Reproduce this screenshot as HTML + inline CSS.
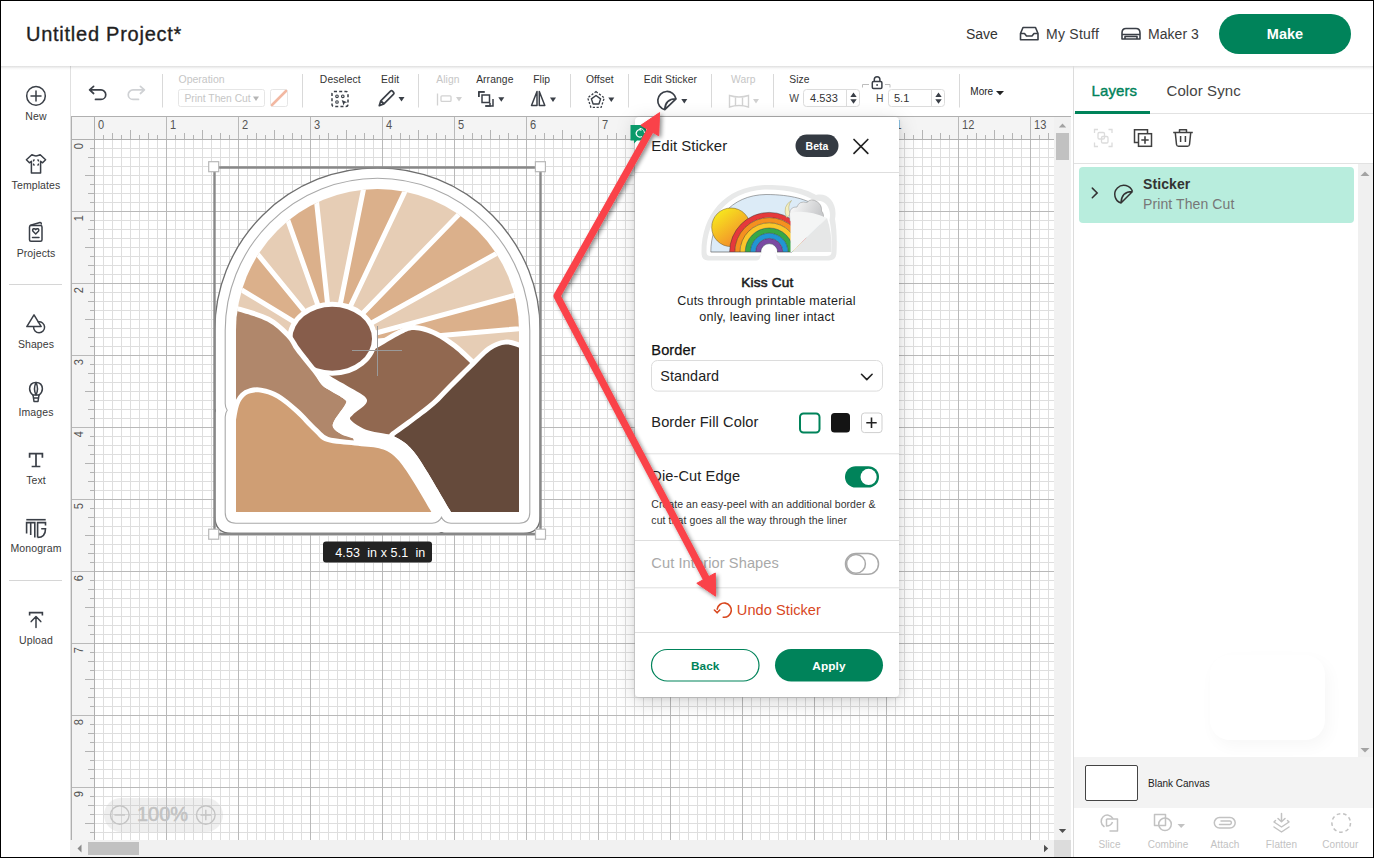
<!DOCTYPE html>
<html><head><meta charset="utf-8"><title>Cricut</title>
<style>
*{box-sizing:border-box;margin:0;padding:0}
html,body{width:1374px;height:858px;overflow:hidden;background:#fff;font-family:"Liberation Sans",sans-serif;color:#222}
.abs{position:absolute}
.t{position:absolute;white-space:nowrap;line-height:1}
</style></head><body>
<div class="abs" style="left:0;top:0;width:1374px;height:66px;background:#fff"></div><div class="abs" style="left:1219px;top:14px;width:132px;height:40px;border-radius:20px;background:#00835a"></div><div class="abs" style="left:70px;top:66px;width:1px;height:792px;background:#e0e0e0"></div><div class="abs" style="left:9px;top:284px;width:53px;height:1px;background:#d6d6d6"></div><div class="abs" style="left:9px;top:580px;width:53px;height:1px;background:#d6d6d6"></div><div class="abs" style="left:71px;top:66px;width:1002px;height:50px;background:#fff"></div><svg width="983" height="724" style="position:absolute;left:71px;top:116px" shape-rendering="crispEdges"><rect x="0" y="0" width="983" height="23" fill="#f4f4f4"/><rect x="0" y="0" width="23" height="724" fill="#f4f4f4"/><rect x="23" y="23" width="960" height="701" fill="#ffffff"/><path d="M32.5 23V724M41.5 23V724M50.5 23V724M59.5 23V724M68.5 23V724M77.5 23V724M86.5 23V724M104.5 23V724M113.5 23V724M122.5 23V724M131.5 23V724M140.5 23V724M149.5 23V724M158.5 23V724M176.5 23V724M185.5 23V724M194.5 23V724M203.5 23V724M212.5 23V724M221.5 23V724M230.5 23V724M248.5 23V724M257.5 23V724M266.5 23V724M275.5 23V724M284.5 23V724M293.5 23V724M302.5 23V724M320.5 23V724M329.5 23V724M338.5 23V724M347.5 23V724M356.5 23V724M365.5 23V724M374.5 23V724M392.5 23V724M401.5 23V724M410.5 23V724M419.5 23V724M428.5 23V724M437.5 23V724M446.5 23V724M464.5 23V724M473.5 23V724M482.5 23V724M491.5 23V724M500.5 23V724M509.5 23V724M518.5 23V724M536.5 23V724M545.5 23V724M554.5 23V724M563.5 23V724M572.5 23V724M581.5 23V724M590.5 23V724M608.5 23V724M617.5 23V724M626.5 23V724M635.5 23V724M644.5 23V724M653.5 23V724M662.5 23V724M680.5 23V724M689.5 23V724M698.5 23V724M707.5 23V724M716.5 23V724M725.5 23V724M734.5 23V724M752.5 23V724M761.5 23V724M770.5 23V724M779.5 23V724M788.5 23V724M797.5 23V724M806.5 23V724M824.5 23V724M833.5 23V724M842.5 23V724M851.5 23V724M860.5 23V724M869.5 23V724M878.5 23V724M896.5 23V724M905.5 23V724M914.5 23V724M923.5 23V724M932.5 23V724M941.5 23V724M950.5 23V724M968.5 23V724M977.5 23V724M23 32.5H983M23 41.5H983M23 50.5H983M23 59.5H983M23 68.5H983M23 77.5H983M23 86.5H983M23 104.5H983M23 113.5H983M23 122.5H983M23 131.5H983M23 140.5H983M23 149.5H983M23 158.5H983M23 176.5H983M23 185.5H983M23 194.5H983M23 203.5H983M23 212.5H983M23 221.5H983M23 230.5H983M23 248.5H983M23 257.5H983M23 266.5H983M23 275.5H983M23 284.5H983M23 293.5H983M23 302.5H983M23 320.5H983M23 329.5H983M23 338.5H983M23 347.5H983M23 356.5H983M23 365.5H983M23 374.5H983M23 392.5H983M23 401.5H983M23 410.5H983M23 419.5H983M23 428.5H983M23 437.5H983M23 446.5H983M23 464.5H983M23 473.5H983M23 482.5H983M23 491.5H983M23 500.5H983M23 509.5H983M23 518.5H983M23 536.5H983M23 545.5H983M23 554.5H983M23 563.5H983M23 572.5H983M23 581.5H983M23 590.5H983M23 608.5H983M23 617.5H983M23 626.5H983M23 635.5H983M23 644.5H983M23 653.5H983M23 662.5H983M23 680.5H983M23 689.5H983M23 698.5H983M23 707.5H983M23 716.5H983" stroke="#dedede" stroke-width="1" fill="none"/><path d="M95.5 0V724M167.5 0V724M239.5 0V724M311.5 0V724M383.5 0V724M455.5 0V724M527.5 0V724M599.5 0V724M671.5 0V724M743.5 0V724M815.5 0V724M887.5 0V724M959.5 0V724M0 95.5H983M0 167.5H983M0 239.5H983M0 311.5H983M0 383.5H983M0 455.5H983M0 527.5H983M0 599.5H983M0 671.5H983" stroke="#b9b9b9" stroke-width="1" fill="none"/><path d="M32.5 19V23M41.5 17V23M50.5 19V23M59.5 14V23M68.5 19V23M77.5 17V23M86.5 19V23M104.5 19V23M113.5 17V23M122.5 19V23M131.5 14V23M140.5 19V23M149.5 17V23M158.5 19V23M176.5 19V23M185.5 17V23M194.5 19V23M203.5 14V23M212.5 19V23M221.5 17V23M230.5 19V23M248.5 19V23M257.5 17V23M266.5 19V23M275.5 14V23M284.5 19V23M293.5 17V23M302.5 19V23M320.5 19V23M329.5 17V23M338.5 19V23M347.5 14V23M356.5 19V23M365.5 17V23M374.5 19V23M392.5 19V23M401.5 17V23M410.5 19V23M419.5 14V23M428.5 19V23M437.5 17V23M446.5 19V23M464.5 19V23M473.5 17V23M482.5 19V23M491.5 14V23M500.5 19V23M509.5 17V23M518.5 19V23M536.5 19V23M545.5 17V23M554.5 19V23M563.5 14V23M572.5 19V23M581.5 17V23M590.5 19V23M608.5 19V23M617.5 17V23M626.5 19V23M635.5 14V23M644.5 19V23M653.5 17V23M662.5 19V23M680.5 19V23M689.5 17V23M698.5 19V23M707.5 14V23M716.5 19V23M725.5 17V23M734.5 19V23M752.5 19V23M761.5 17V23M770.5 19V23M779.5 14V23M788.5 19V23M797.5 17V23M806.5 19V23M824.5 19V23M833.5 17V23M842.5 19V23M851.5 14V23M860.5 19V23M869.5 17V23M878.5 19V23M896.5 19V23M905.5 17V23M914.5 19V23M923.5 14V23M932.5 19V23M941.5 17V23M950.5 19V23M968.5 19V23M977.5 17V23M19 32.5H23M17 41.5H23M19 50.5H23M14 59.5H23M19 68.5H23M17 77.5H23M19 86.5H23M19 104.5H23M17 113.5H23M19 122.5H23M14 131.5H23M19 140.5H23M17 149.5H23M19 158.5H23M19 176.5H23M17 185.5H23M19 194.5H23M14 203.5H23M19 212.5H23M17 221.5H23M19 230.5H23M19 248.5H23M17 257.5H23M19 266.5H23M14 275.5H23M19 284.5H23M17 293.5H23M19 302.5H23M19 320.5H23M17 329.5H23M19 338.5H23M14 347.5H23M19 356.5H23M17 365.5H23M19 374.5H23M19 392.5H23M17 401.5H23M19 410.5H23M14 419.5H23M19 428.5H23M17 437.5H23M19 446.5H23M19 464.5H23M17 473.5H23M19 482.5H23M14 491.5H23M19 500.5H23M17 509.5H23M19 518.5H23M19 536.5H23M17 545.5H23M19 554.5H23M14 563.5H23M19 572.5H23M17 581.5H23M19 590.5H23M19 608.5H23M17 617.5H23M19 626.5H23M14 635.5H23M19 644.5H23M17 653.5H23M19 662.5H23M19 680.5H23M17 689.5H23M19 698.5H23M14 707.5H23M19 716.5H23" stroke="#b4b4b4" stroke-width="1" fill="none"/><path d="M0 0.5H983M0.5 0V724M0 23.5H983M23.5 0V724" stroke="#b0b0b0" stroke-width="1" fill="none"/><text transform="translate(27.1,13) scale(0.9,1)" font-size="12.3" fill="#555" font-family="Liberation Sans">0</text><text transform="translate(99.1,13) scale(0.9,1)" font-size="12.3" fill="#555" font-family="Liberation Sans">1</text><text transform="translate(171.1,13) scale(0.9,1)" font-size="12.3" fill="#555" font-family="Liberation Sans">2</text><text transform="translate(243.1,13) scale(0.9,1)" font-size="12.3" fill="#555" font-family="Liberation Sans">3</text><text transform="translate(315.1,13) scale(0.9,1)" font-size="12.3" fill="#555" font-family="Liberation Sans">4</text><text transform="translate(387.1,13) scale(0.9,1)" font-size="12.3" fill="#555" font-family="Liberation Sans">5</text><text transform="translate(459.1,13) scale(0.9,1)" font-size="12.3" fill="#555" font-family="Liberation Sans">6</text><text transform="translate(531.1,13) scale(0.9,1)" font-size="12.3" fill="#555" font-family="Liberation Sans">7</text><text transform="translate(603.1,13) scale(0.9,1)" font-size="12.3" fill="#555" font-family="Liberation Sans">8</text><text transform="translate(675.1,13) scale(0.9,1)" font-size="12.3" fill="#555" font-family="Liberation Sans">9</text><text transform="translate(747.1,13) scale(0.9,1)" font-size="12.3" fill="#555" font-family="Liberation Sans">10</text><text transform="translate(819.1,13) scale(0.9,1)" font-size="12.3" fill="#555" font-family="Liberation Sans">11</text><text transform="translate(891.1,13) scale(0.9,1)" font-size="12.3" fill="#555" font-family="Liberation Sans">12</text><text transform="translate(963.1,13) scale(0.9,1)" font-size="12.3" fill="#555" font-family="Liberation Sans">13</text><text transform="translate(12,27) rotate(-90) scale(0.9,1)" text-anchor="end" font-size="12.3" fill="#555" font-family="Liberation Sans">0</text><text transform="translate(12,99) rotate(-90) scale(0.9,1)" text-anchor="end" font-size="12.3" fill="#555" font-family="Liberation Sans">1</text><text transform="translate(12,171) rotate(-90) scale(0.9,1)" text-anchor="end" font-size="12.3" fill="#555" font-family="Liberation Sans">2</text><text transform="translate(12,243) rotate(-90) scale(0.9,1)" text-anchor="end" font-size="12.3" fill="#555" font-family="Liberation Sans">3</text><text transform="translate(12,315) rotate(-90) scale(0.9,1)" text-anchor="end" font-size="12.3" fill="#555" font-family="Liberation Sans">4</text><text transform="translate(12,387) rotate(-90) scale(0.9,1)" text-anchor="end" font-size="12.3" fill="#555" font-family="Liberation Sans">5</text><text transform="translate(12,459) rotate(-90) scale(0.9,1)" text-anchor="end" font-size="12.3" fill="#555" font-family="Liberation Sans">6</text><text transform="translate(12,531) rotate(-90) scale(0.9,1)" text-anchor="end" font-size="12.3" fill="#555" font-family="Liberation Sans">7</text><text transform="translate(12,603) rotate(-90) scale(0.9,1)" text-anchor="end" font-size="12.3" fill="#555" font-family="Liberation Sans">8</text><text transform="translate(12,675) rotate(-90) scale(0.9,1)" text-anchor="end" font-size="12.3" fill="#555" font-family="Liberation Sans">9</text></svg><div class="abs" style="left:0;top:66px;width:1374px;height:4px;background:linear-gradient(rgba(0,0,0,0.13),rgba(0,0,0,0.03) 60%,rgba(0,0,0,0))"></div><div class="abs" style="left:1054px;top:117px;width:17px;height:723px;background:#f1f1f1"></div><div class="abs" style="left:1056px;top:133px;width:13px;height:27px;background:#c1c1c1"></div><div class="abs" style="left:70px;top:840px;width:984px;height:17px;background:#f1f1f1"></div><div class="abs" style="left:88px;top:842px;width:51px;height:13px;background:#c1c1c1"></div><div class="abs" style="left:1054px;top:116px;width:17px;height:1px;background:#b0b0b0"></div><div class="abs" style="left:1054px;top:840px;width:17px;height:17px;background:#dcdcdc"></div><svg width="1374" height="858" style="position:absolute;left:0;top:0"><path d="M1058.8 127.5 L1062.5 123.5 L1066.2 127.5 Z" fill="#a3a3a3"/><path d="M1058.8 829 H1066.2 L1062.5 833 Z" fill="#505050"/><path d="M81.5 844.5 V852.5 L77.5 848.5 Z" fill="#8a8a8a"/><path d="M1044 844.8 V852.2 L1048.2 848.5 Z" fill="#505050"/></svg><div class="abs" style="left:1073px;top:66px;width:1px;height:792px;background:#dcdcdc"></div><div class="abs" style="left:1074px;top:113px;width:299px;height:1px;background:#e2e2e2"></div><div class="abs" style="left:1075px;top:111px;width:75px;height:3px;background:#00835a"></div><div class="abs" style="left:1074px;top:163px;width:299px;height:1px;background:#e2e2e2"></div><div class="abs" style="left:1358px;top:164px;width:15px;height:593px;background:#f0f0f0"></div><div class="abs" style="left:1079px;top:167px;width:275px;height:56px;border-radius:4px;background:#b8eddd"></div><div class="abs" style="left:1074px;top:757px;width:299px;height:51px;background:#f3f3f3"></div><div class="abs" style="left:1085px;top:765px;width:53px;height:36px;background:#fff;border:1px solid #444;border-radius:2px"></div><div class="abs" style="left:1210px;top:655px;width:115px;height:85px;border-radius:20px;box-shadow:4px 6px 16px rgba(0,0,0,0.035)"></div><svg width="1374" height="858" style="position:absolute;left:0;top:0" viewBox="0 0 1374 858" font-family="Liberation Sans, sans-serif"><text x="26" y="40.5" font-size="20" fill="#1f1f1f" letter-spacing="0.75" stroke="#1f1f1f" stroke-width="0.35">Untitled Project*</text><text x="966" y="39" font-size="14" fill="#333" >Save</text><text x="1046" y="39" font-size="14" fill="#3a3a3a" letter-spacing="0.25" >My Stuff</text><text x="1148" y="39" font-size="14" fill="#3a3a3a" letter-spacing="0.05" >Maker 3</text><text x="1285" y="39.3" font-size="14.5" fill="#fff" font-weight="700" text-anchor="middle" >Make</text><path d="M1020.5 33.5 L1023 27.5 H1035.5 L1038 33.5 V39.8 H1020.5 Z M1020.5 33.5 H1024.5 L1026.5 36 H1032 L1034 33.5 H1038" fill="none" stroke="#3a3f47" stroke-width="1.6" stroke-linejoin="round"/><path d="M1122 33 Q1122 28.5 1126 28.5 H1136 Q1140 28.5 1140 33 V39 H1122 Z M1122 34.5 H1140 M1125 39 V36.5 H1137 V39" fill="none" stroke="#3a3f47" stroke-width="1.6" stroke-linejoin="round"/><text x="36" y="120" font-size="10.5" fill="#3a3a3a" letter-spacing="0.1" text-anchor="middle" >New</text><text x="36" y="188.5" font-size="10.5" fill="#3a3a3a" letter-spacing="0.1" text-anchor="middle" >Templates</text><text x="36" y="256.5" font-size="10.5" fill="#3a3a3a" letter-spacing="0.1" text-anchor="middle" >Projects</text><text x="36" y="348" font-size="10.5" fill="#3a3a3a" letter-spacing="0.1" text-anchor="middle" >Shapes</text><text x="36" y="416" font-size="10.5" fill="#3a3a3a" letter-spacing="0.1" text-anchor="middle" >Images</text><text x="36" y="484" font-size="10.5" fill="#3a3a3a" letter-spacing="0.1" text-anchor="middle" >Text</text><text x="36" y="552" font-size="10.5" fill="#3a3a3a" letter-spacing="0.1" text-anchor="middle" >Monogram</text><text x="36" y="644" font-size="10.5" fill="#3a3a3a" letter-spacing="0.1" text-anchor="middle" >Upload</text><circle cx="36" cy="95.9" r="9.3" fill="none" stroke="#3a3f47" stroke-width="1.5" stroke-linecap="round" stroke-linejoin="round"/><path d="M36 91V101M31 96H41" fill="none" stroke="#3a3f47" stroke-width="1.5" stroke-linecap="round" stroke-linejoin="round"/><path d="M31.8 154.7 Q36 157.2 40.2 154.7 L45.6 159.8 L42.6 162.8 L40.6 161.3 V173 H31.4 V161.3 L29.4 162.8 L26.4 159.8 Z" fill="none" stroke="#3a3f47" stroke-width="1.5" stroke-linecap="round" stroke-linejoin="round"/><path d="M33.5 161.5V160H35M37 160H38.5V161.5M38.5 163.5V165H37M35 165H33.5V163.5" fill="none" stroke="#3a3f47" stroke-width="1.2"/><rect x="29.5" y="225.5" width="12.5" height="15.8" rx="1.5" fill="none" stroke="#3a3f47" stroke-width="1.5" stroke-linecap="round" stroke-linejoin="round"/><path d="M30.5 225.3 L40 222.5 Q41.2 222.3 41.3 224" fill="none" stroke="#3a3f47" stroke-width="1.5" stroke-linecap="round" stroke-linejoin="round"/><path d="M35.7 234 L33 231.3 Q32 229.5 33.6 228.8 Q35 228.4 35.7 229.7 Q36.4 228.4 37.8 228.8 Q39.4 229.5 38.4 231.3 Z" fill="none" stroke="#3a3f47" stroke-width="1.5" stroke-linecap="round" stroke-linejoin="round"/><path d="M32.5 237.5H39" fill="none" stroke="#3a3f47" stroke-width="1.5" stroke-linecap="round" stroke-linejoin="round"/><path d="M34 314.8 L26.8 326.6 H41.2 Z" fill="none" stroke="#3a3f47" stroke-width="1.5" stroke-linecap="round" stroke-linejoin="round"/><path d="M38.3 321.8 A5.5 5.5 0 1 1 33.6 326.8" fill="none" stroke="#3a3f47" stroke-width="1.5" stroke-linecap="round" stroke-linejoin="round"/><path d="M32.8 395 Q29.5 392 29.6 388.8 Q29.8 382.4 36 382.4 Q42.2 382.4 42.4 388.8 Q42.5 392 39.2 395 Z" fill="none" stroke="#3a3f47" stroke-width="1.5" stroke-linecap="round" stroke-linejoin="round"/><path d="M36 382.6 Q33 388.5 36 395 Q39 388.5 36 382.6" fill="none" stroke="#3a3f47" stroke-width="1.5" stroke-linecap="round" stroke-linejoin="round"/><path d="M33 395 L34 401.5 H38 L39 395 M33.6 398 H38.4" fill="none" stroke="#3a3f47" stroke-width="1.5" stroke-linecap="round" stroke-linejoin="round"/><path d="M29.6 457 V453.6 H42.4 V457 M36 453.8 V466.5 M32.5 466.5 H39.5" fill="none" stroke="#3a3f47" stroke-width="1.7" stroke-linecap="square"/><path d="M26.3 519.7 H45.7" fill="none" stroke="#3a3f47" stroke-width="1.6"/><path d="M26.6 533.5 V522.6 H34.8 V537.5 M30.7 535 V522.6 M37.6 537.5 V522.6 H45.5 V525.5 M41.2 528.7 H45.5 Q45.5 537.3 37.6 537.5" fill="none" stroke="#3a3f47" stroke-width="1.6"/><path d="M29.6 615.5 V612.6 H42.4 V615.5" fill="none" stroke="#3a3f47" stroke-width="1.6"/><path d="M31.2 621.6 L36 616.6 L40.8 621.6 M36 617 V627.5" fill="none" stroke="#3a3f47" stroke-width="1.5" stroke-linecap="round" stroke-linejoin="round" stroke-width="1.7"/><path d="M162.5 74V107.5" stroke="#d9d9d9" stroke-width="1"/><path d="M302.5 74V107.5" stroke="#d9d9d9" stroke-width="1"/><path d="M418.5 74V107.5" stroke="#d9d9d9" stroke-width="1"/><path d="M570.5 74V107.5" stroke="#d9d9d9" stroke-width="1"/><path d="M628.5 74V107.5" stroke="#d9d9d9" stroke-width="1"/><path d="M711.5 74V107.5" stroke="#d9d9d9" stroke-width="1"/><path d="M773.5 74V107.5" stroke="#d9d9d9" stroke-width="1"/><path d="M959.5 74V107.5" stroke="#d9d9d9" stroke-width="1"/><path d="M93.6 86.3 L89.6 89.9 L93.6 93.5 M89.8 89.9 H101 A4.75 4.75 0 0 1 101 99.4 H95.5" fill="none" stroke="#3a3f47" stroke-width="1.7" stroke-linecap="round" stroke-linejoin="round"/><path d="M140.4 86.3 L144.4 89.9 L140.4 93.5 M144.2 89.9 H133 A4.75 4.75 0 0 0 133 99.4 H138.5" fill="none" stroke="#cfd1d4" stroke-width="1.7" stroke-linecap="round" stroke-linejoin="round"/><text x="178.5" y="83" font-size="10.5" fill="#c6c6c6" >Operation</text><rect x="178.5" y="89.5" width="86" height="17" rx="2" fill="#fff" stroke="#e6e6e6"/><text x="184.5" y="101.7" font-size="10.3" fill="#c6c6c6" >Print Then Cut</text><path d="M253 96.5 H259 L256 101 Z" fill="#b5b5b5"/><rect x="270.5" y="89.5" width="17" height="17" rx="2" fill="#fff" stroke="#e6e6e6"/><path d="M272 105 L286 91" stroke="#f2b8a2" stroke-width="2.6" stroke-linecap="round"/><text x="340.3" y="83" font-size="10.3" fill="#333" letter-spacing="0.1" text-anchor="middle" >Deselect</text><text x="390.2" y="83" font-size="10.3" fill="#333" letter-spacing="0.1" text-anchor="middle" >Edit</text><text x="447.9" y="83" font-size="10.3" fill="#c6c6c6" letter-spacing="0.1" text-anchor="middle" >Align</text><text x="494.8" y="83" font-size="10.3" fill="#333" letter-spacing="0.1" text-anchor="middle" >Arrange</text><text x="541.7" y="83" font-size="10.3" fill="#333" letter-spacing="0.1" text-anchor="middle" >Flip</text><text x="599.9" y="83" font-size="10.3" fill="#333" letter-spacing="0.1" text-anchor="middle" >Offset</text><text x="670.5" y="83" font-size="10.3" fill="#333" letter-spacing="0.1" text-anchor="middle" >Edit Sticker</text><text x="743.3" y="83" font-size="10.3" fill="#c6c6c6" letter-spacing="0.1" text-anchor="middle" >Warp</text><rect x="332" y="91.5" width="16" height="15" rx="2" fill="none" stroke="#3a3f47" stroke-width="1.5" stroke-dasharray="3 2.2"/><circle cx="337" cy="96.3" r="1.3" fill="none" stroke="#3a3f47" stroke-width="1.1"/><circle cx="342.8" cy="96.3" r="1.3" fill="none" stroke="#3a3f47" stroke-width="1.1"/><circle cx="337" cy="102" r="1.3" fill="none" stroke="#3a3f47" stroke-width="1.1"/><path d="M341.7 100 L347.2 102.3 L344.6 103 L343.6 105.6 Z" fill="#3a3f47"/><path d="M379.3 105.6 L380.8 100.8 L390.5 91.1 Q391.5 90.3 392.5 91.2 L393.6 92.3 Q394.4 93.3 393.6 94.2 L383.9 103.9 Z M381 100.8 L383.9 103.9" fill="none" stroke="#3a3f47" stroke-width="1.7" stroke-linecap="round" stroke-linejoin="round" stroke-width="1.5"/><path d="M398.5 97 H404.5 L401.5 101.5 Z" fill="#3a3f47"/><path d="M437.5 93.5 V105.5" stroke="#d2d2d2" stroke-width="1.3"/><rect x="441" y="95.8" width="10" height="5.6" rx="1" fill="none" stroke="#d2d2d2" stroke-width="1.3"/><path d="M456 97 H462 L459 101.5 Z" fill="#d0d0d0"/><path d="M478.8 97 V92 H484.8 M490 103 V106 H485" fill="none" stroke="#3a3f47" stroke-width="1.5"/><rect x="482" y="95" width="7.5" height="7.5" fill="none" stroke="#3a3f47" stroke-width="1.5"/><path d="M478.8 97 V92.5 Q478.8 91.8 479.6 91.8 H484.4" fill="none" stroke="#3a3f47" stroke-width="1.5"/><path d="M486 106 H493 V99" fill="none" stroke="#3a3f47" stroke-width="1.5"/><path d="M498.3 97.2 H504.3 L501.3 101.7 Z" fill="#3a3f47"/><path d="M537 91.5 V105.5 H531.5 Z M539.3 91.5 V105.5 H544.8 Z" fill="none" stroke="#3a3f47" stroke-width="1.5" stroke-linejoin="round"/><path d="M550 97.5 H556 L553 102.0 Z" fill="#3a3f47"/><path d="M596 91.6 L604.3 97.8 L601.1 107.4 H590.9 L587.7 97.8 Z" fill="none" stroke="#3a3f47" stroke-width="1.3" stroke-dasharray="2.2 1.6"/><path d="M596 95.5 L600.6 98.9 L598.9 104 H593.1 L591.4 98.9 Z" fill="none" stroke="#3a3f47" stroke-width="1.4" stroke-linejoin="round"/><path d="M608.3 97.5 H614.3 L611.3 102.0 Z" fill="#3a3f47"/><path d="M676 98.8 A9.2 9.2 0 1 0 664.8 109.6 M676 98.8 Q665.2 98.6 664.8 109.6 L676 98.8" fill="none" stroke="#3a3f47" stroke-width="1.7" stroke-linecap="round" stroke-linejoin="round" stroke-width="1.6"/><path d="M681.3 99 H687.3 L684.3 103.5 Z" fill="#3a3f47"/><path d="M729.5 95.5 Q739 98.5 748.5 95.5 V107 Q739 104 729.5 107 Z M735.5 97 V105.5 M742.5 97 V105.5" fill="none" stroke="#d2d2d2" stroke-width="1.4"/><path d="M753 99 H759 L756 103.5 Z" fill="#d0d0d0"/><text x="789.2" y="83" font-size="10.3" fill="#333" letter-spacing="0.1" >Size</text><text x="789.3" y="101.7" font-size="10.3" fill="#444" >W</text><rect x="803.5" y="89.5" width="56" height="17" rx="3" fill="#fff" stroke="#dcdcdc"/><path d="M846.5 90V106" stroke="#dcdcdc"/><text x="810" y="101.9" font-size="11" fill="#333" letter-spacing="0.1" >4.533</text><path d="M850.3 97 L853.5 92.5 L856.7 97 Z M850.3 99.2 H856.7 L853.5 103.7 Z" fill="#3a3f47"/><path d="M862.5 87.5 V84.5 H869 M885 84.5 H890 V87.5" fill="none" stroke="#bdbdbd" stroke-width="1"/><rect x="872.3" y="81.6" width="9.6" height="6.8" rx="1.2" fill="none" stroke="#3a3f47" stroke-width="1.5"/><path d="M874.3 81.6 V79.5 A2.8 2.8 0 0 1 879.9 79.5 V81.6" fill="none" stroke="#3a3f47" stroke-width="1.5"/><circle cx="877.1" cy="85" r="0.9" fill="#3a3f47"/><text x="876" y="101.7" font-size="10.3" fill="#444" >H</text><rect x="888.5" y="89.5" width="56" height="17" rx="3" fill="#fff" stroke="#dcdcdc"/><path d="M931.5 90V106" stroke="#dcdcdc"/><text x="894" y="101.9" font-size="11" fill="#333" >5.1</text><path d="M935.3 97 L938.5 92.5 L941.7 97 Z M935.3 99.2 H941.7 L938.5 103.7 Z" fill="#3a3f47"/><text x="970.3" y="95" font-size="10" fill="#222" >More</text><path d="M996 91 H1004 L1000 95.3 Z" fill="#222"/><text x="1091.5" y="95.5" font-size="15" fill="#00835a" letter-spacing="0.1" stroke="#00835a" stroke-width="0.4">Layers</text><text x="1166.5" y="95.5" font-size="15" fill="#444" letter-spacing="0.1" >Color Sync</text><path d="M1094.5 133 V129.5 H1098 M1108.5 129.5 H1112 V133 M1112 142.5 V146.5 H1108.5 M1098 146.5 H1094.5 V142.5" fill="none" stroke="#dcdcdc" stroke-width="1.3"/><rect x="1098" y="132.5" width="6.5" height="6.5" rx="1.3" fill="none" stroke="#dcdcdc" stroke-width="1.3"/><rect x="1101.5" y="136.5" width="6.5" height="6.5" rx="1.3" fill="none" stroke="#dcdcdc" stroke-width="1.3"/><path d="M1138 142.5 H1134.5 V129.7 H1147.5 V133.5" fill="none" stroke="#404040" stroke-width="1.5"/><rect x="1138.5" y="133.7" width="13" height="12.6" fill="none" stroke="#404040" stroke-width="1.5"/><path d="M1141.3 140 H1148.7 M1145 136.3 V143.7" stroke="#404040" stroke-width="1.6"/><path d="M1173.2 132.6 H1192.8 M1179.5 132.6 V129.7 H1186.5 V132.6 M1175.3 132.8 L1176.5 144.5 Q1176.8 146.3 1178.5 146.3 H1187.5 Q1189.2 146.3 1189.5 144.5 L1190.7 132.8 M1180.6 136 V142 M1185.4 136 V142" fill="none" stroke="#404040" stroke-width="1.5" stroke-linejoin="round"/><path d="M1092.3 188.1 L1097.2 192.9 L1092.3 197.7" fill="none" stroke="#333" stroke-width="1.5" stroke-linecap="round"/><path d="M1132.5 191.5 A9.1 9.1 0 1 0 1121 203 M1132.5 191.5 Q1121.4 191.4 1121 203 L1132.5 191.5" fill="none" stroke="#333" stroke-width="1.5" stroke-linejoin="round"/><text x="1143" y="189" font-size="14" fill="#333" font-weight="700" letter-spacing="0.1" >Sticker</text><text x="1143" y="208.8" font-size="14" fill="#777" letter-spacing="0.1" >Print Then Cut</text><path d="M1360.5 176 L1365 171.5 L1369.5 176 Z" fill="#a3a3a3"/><path d="M1360.5 748 H1369.5 L1365 752.5 Z" fill="#a3a3a3"/><text x="1148" y="786.5" font-size="10" fill="#222" >Blank Canvas</text><text x="1109.5" y="847.5" font-size="10" fill="#c2c2c2" letter-spacing="0.1" text-anchor="middle" >Slice</text><text x="1168" y="847.5" font-size="10" fill="#c2c2c2" letter-spacing="0.1" text-anchor="middle" >Combine</text><text x="1225" y="847.5" font-size="10" fill="#c2c2c2" letter-spacing="0.1" text-anchor="middle" >Attach</text><text x="1281.5" y="847.5" font-size="10" fill="#c2c2c2" letter-spacing="0.1" text-anchor="middle" >Flatten</text><text x="1340.3" y="847.5" font-size="10" fill="#c2c2c2" letter-spacing="0.1" text-anchor="middle" >Contour</text><path d="M1104 826.5 A6.2 6.2 0 1 1 1112.8 818.3" fill="none" stroke="#c2c2c2" stroke-width="1.5" stroke-linejoin="round" stroke-linecap="round"/><path d="M1106.5 819 H1117.5 V831 H1109.5" fill="none" stroke="#c2c2c2" stroke-width="1.5" stroke-linejoin="round"/><path d="M1106.5 819 V826 Q1111 826 1112.5 822" fill="none" stroke="#c2c2c2" stroke-width="1.5" stroke-linejoin="round"/><rect x="1154.5" y="814.5" width="11" height="11" fill="none" stroke="#c2c2c2" stroke-width="1.5" stroke-linejoin="round"/><circle cx="1165" cy="824.3" r="6.3" fill="none" stroke="#c2c2c2" stroke-width="1.5" stroke-linejoin="round"/><path d="M1177.5 824 H1185 L1181.2 828 Z" fill="#c2c2c2"/><path d="M1219 828 H1230 A5.2 5.2 0 0 0 1230 817.6 H1219.5 A5.2 5.2 0 0 0 1219.5 828 M1219.5 824.5 H1230 A1.8 1.8 0 0 0 1230 821 H1221" fill="none" stroke="#c2c2c2" stroke-width="1.5" stroke-linejoin="round" stroke-linecap="round"/><path d="M1281.5 813.5 V821.5 M1278 818.5 L1281.5 821.8 L1285 818.5 M1275.5 820.5 L1274 822 L1281.5 827 L1289 822 L1287.5 820.5 M1274 827 L1281.5 832 L1289 827" fill="none" stroke="#c2c2c2" stroke-width="1.5" stroke-linejoin="round" stroke-linecap="round"/><circle cx="1341.2" cy="822.9" r="9.3" fill="none" stroke="#c2c2c2" stroke-width="1.5" stroke-dasharray="3.6 2.9"/></svg><svg width="1374" height="858" style="position:absolute;left:0;top:0" viewBox="0 0 1374 858"><defs><clipPath id="ac"><path d="M236 330.5 A141.5 141.5 0 0 1 519 330.5 V512 H236 Z"/></clipPath></defs><path d="M214.8 330.5 A162.7 162.7 0 0 1 540.2 330.5 V516 Q540.2 533.5 523.2 533.5 H444 Q441.5 531.8 439 533.5 H231.8 Q214.8 533.5 214.8 516 V412.5 Q216.0 410.5 214.8 408.5 Z" fill="#fff" stroke="#6e6e6e" stroke-width="1.3"/><path d="M225.2 330.5 A152.3 152.3 0 0 1 529.8 330.5 V512.5 Q529.8 523.2 519.0999999999999 523.2 H451 Q444 523 441.5 517.3 Q439 523 432 523.2 H235.89999999999998 Q225.2 523.2 225.2 512.5 V417 Q225.2 413 227.2 410.2 Q225.2 407.3 225.2 403.5 Z" fill="none" stroke="#a9a9a9" stroke-width="1.1"/><g clip-path="url(#ac)"><path d="M332 345 L-66.0 384.8 L-9.5 136.8 Z" fill="#e6cdb5"/><path d="M332 345 L-9.5 136.8 L78.6 35.5 Z" fill="#dbb08b"/><path d="M332 345 L78.6 35.5 L198.6 -32.1 Z" fill="#e6cdb5"/><path d="M332 345 L198.6 -32.1 L289.1 -52.7 Z" fill="#dbb08b"/><path d="M332 345 L289.1 -52.7 L411.3 -47.1 Z" fill="#e6cdb5"/><path d="M332 345 L411.3 -47.1 L503.6 -16.3 Z" fill="#dbb08b"/><path d="M332 345 L503.6 -16.3 L610.7 58.1 Z" fill="#e6cdb5"/><path d="M332 345 L610.7 58.1 L681.6 150.5 Z" fill="#dbb08b"/><path d="M332 345 L681.6 150.5 L718.0 240.1 Z" fill="#e6cdb5"/><path d="M332 345 L718.0 240.1 L730.5 310.2 Z" fill="#dbb08b"/><path d="M332 345 L730.5 310.2 L715.1 459.9 Z" fill="#e6cdb5"/><path d="M332 345 L-9.5 136.8M332 345 L78.6 35.5M332 345 L198.6 -32.1M332 345 L289.1 -52.7M332 345 L411.3 -47.1M332 345 L503.6 -16.3M332 345 L610.7 58.1M332 345 L681.6 150.5M332 345 L718.0 240.1M332 345 L730.5 310.2" stroke="#fff" stroke-width="5" fill="none"/><path d="M332 366 C336.7 364.3 352.1 359.3 360.0 356.0 C367.9 352.7 373.0 349.9 379.7 346.4 C386.4 342.9 394.3 337.5 400.0 334.8 C405.7 332.1 408.3 329.9 414.1 330.0 C419.9 330.1 428.1 332.7 434.6 335.7 C441.1 338.7 447.1 343.1 453.2 347.8 C459.3 352.5 468.0 361.1 471.0 363.7 L480 372 L440 430 L392 450 L340 440 L325 390 Z" fill="#916850" stroke="#fff" stroke-width="10" stroke-linejoin="round" paint-order="stroke"/><ellipse cx="332.2" cy="338.7" rx="39.8" ry="32" fill="#875d4b" stroke="#fff" stroke-width="10" stroke-linejoin="round" paint-order="stroke"/><path d="M225 309.5 C227.1 309.8 230.4 309.2 237.5 311.2 C244.6 313.2 259.2 317.2 267.3 321.5 C275.4 325.8 281.7 332.3 286.3 337.0 C290.9 341.7 291.6 345.1 294.7 349.5 C297.8 353.9 301.9 358.9 305.2 363.1 C308.5 367.3 311.8 371.1 314.6 374.7 C317.4 378.3 319.3 382.3 322.0 385.0 C324.7 387.7 327.3 388.7 331.0 391.0 C334.7 393.3 341.6 396.8 344.0 399.0 C346.4 401.2 347.2 400.4 345.6 404.0 C344.0 407.6 336.4 416.5 334.4 420.5 C332.4 424.5 332.2 425.7 333.5 428.0 C334.8 430.3 338.6 432.8 341.9 434.5 C345.1 436.2 351.1 437.7 353.0 438.3 L358 452 L225 452 Z" fill="#b0876b" stroke="#fff" stroke-width="10" stroke-linejoin="round" paint-order="stroke"/><path d="M393.9 436.2 C396.7 434.2 403.9 429.2 410.7 424.1 C417.5 419.0 427.7 411.6 434.6 405.6 C441.5 399.6 445.8 394.2 452.0 388.0 C458.2 381.8 465.5 374.6 471.9 368.3 C478.3 362.1 484.9 354.4 490.5 350.5 C496.1 346.6 500.8 345.1 505.5 344.6 C510.2 344.1 514.4 346.1 518.5 347.5 C522.6 348.9 528.1 352.1 530.0 353.0 L535 360 L535 530 L458 530 L450.8 511.7 C446.0 503.6 429.2 474.4 421.9 463.2 C414.6 452.0 411.7 449.1 407.0 444.6 C402.3 440.1 396.1 437.6 393.9 436.2 Z" fill="#654a3b" stroke="#fff" stroke-width="10" stroke-linejoin="round" paint-order="stroke"/><path d="M314 372 C315.3 374.2 319.2 381.8 322.0 385.0 C324.8 388.2 327.3 388.7 331.0 391.0 C334.7 393.3 341.6 396.8 344.0 399.0 C346.4 401.2 347.2 400.4 345.6 404.0 C344.0 407.6 336.4 416.5 334.4 420.5 C332.4 424.5 332.2 425.7 333.5 428.0 C334.8 430.3 338.6 432.8 341.9 434.5 C345.1 436.2 347.5 434.9 353.0 438.3 C358.5 441.7 366.3 448.1 375.0 455.0 C383.7 461.9 396.7 469.2 405.0 480.0 C413.3 490.8 421.7 513.3 425.0 520.0 L458 525 L450.8 511.7 C446.0 503.6 429.2 474.4 421.9 463.2 C414.6 452.0 411.7 449.1 407.0 444.6 C402.3 440.1 397.0 437.9 393.9 436.2 C390.8 434.5 392.9 435.4 388.3 434.3 C383.7 433.2 372.2 432.0 366.0 429.7 C359.8 427.4 353.2 422.8 351.0 420.3 C348.8 417.8 350.4 417.6 352.9 414.8 C355.4 412.0 364.1 406.7 366.0 403.6 C367.9 400.5 367.2 399.1 364.1 396.1 C361.0 393.2 352.6 389.0 347.3 385.9 C342.0 382.8 336.1 379.8 332.4 377.5 C328.7 375.2 326.2 372.9 325.0 372.0 Z" fill="#fff"/><path d="M232 445 C232.7 440.5 235.1 424.8 236.3 418.0 C237.5 411.2 238.0 408.0 239.3 404.5 C240.6 401.0 242.3 398.7 244.2 396.8 C246.1 394.9 247.8 394.0 250.5 393.3 C253.2 392.6 255.8 391.8 260.2 392.6 C264.6 393.4 270.8 394.8 276.6 398.2 C282.5 401.6 289.1 407.4 295.3 413.0 C301.5 418.6 308.6 426.9 313.9 431.7 C319.1 436.5 320.0 439.5 326.8 441.8 C333.6 444.1 346.1 444.4 354.8 445.5 C363.5 446.6 372.5 446.6 379.0 448.3 C385.5 450.0 388.9 451.5 393.9 455.8 C398.9 460.1 402.6 465.1 408.8 474.4 C415.0 483.7 426.7 503.9 431.2 511.7 C435.7 519.5 435.2 519.5 436.0 521.0 L225 521 L225 445 Z" fill="#cf9e74" stroke="#fff" stroke-width="10" stroke-linejoin="round" paint-order="stroke"/></g><path d="M377.5 326V376M352 350.5H402" stroke="#9a9a9a" stroke-width="1"/><path d="M214.5 167.5H540.5V534H214.5Z" fill="none" stroke="#888" stroke-width="2.4"/><rect x="208.7" y="161.7" width="10" height="10" fill="#fff" stroke="#b8b8b8" stroke-width="1.2"/><rect x="535.4" y="161.7" width="10" height="10" fill="#fff" stroke="#b8b8b8" stroke-width="1.2"/><rect x="208.7" y="529.2" width="10" height="10" fill="#fff" stroke="#b8b8b8" stroke-width="1.2"/><rect x="535.5" y="529.2" width="10" height="10" fill="#fff" stroke="#b8b8b8" stroke-width="1.2"/><rect x="323" y="541.5" width="109" height="21" rx="3" fill="#222"/><text x="335.3" y="557" font-size="12.5" fill="#fff" style="white-space:pre" letter-spacing="0.1">4.53  in x 5.1  in</text></svg><div class="abs" style="left:104px;top:798px;width:119px;height:34px;border-radius:17px;background:rgba(190,190,190,0.25)"></div><svg width="1374" height="858" style="position:absolute;left:0;top:0" font-family="Liberation Sans, sans-serif"><circle cx="119.8" cy="815" r="9.3" fill="none" stroke="#c4c4c4" stroke-width="1.4"/><path d="M114.5 815H125" stroke="#c4c4c4" stroke-width="1.4"/><text x="137" y="821.3" font-size="20" fill="#c2c2c2" stroke="#c2c2c2" stroke-width="0.5">100%</text><circle cx="205.8" cy="815" r="9.3" fill="none" stroke="#c4c4c4" stroke-width="1.4"/><path d="M200.5 815H211M205.8 809.7V820.3" stroke="#c4c4c4" stroke-width="1.4"/></svg><div class="abs" style="left:635px;top:117px;width:264px;height:580px;background:#fff;border-radius:4px;box-shadow:0 5px 20px rgba(0,0,0,0.17),0 1px 4px rgba(0,0,0,0.1)"></div><svg width="1374" height="858" style="position:absolute;left:0;top:0" viewBox="0 0 1374 858" font-family="Liberation Sans, sans-serif"><text x="651.3" y="151.4" font-size="15" fill="#1e1e1e" >Edit Sticker</text><rect x="795.5" y="134.6" width="43" height="22.4" rx="11.2" fill="#343a42"/><text x="817" y="149.6" font-size="10.5" fill="#fff" font-weight="700" text-anchor="middle" >Beta</text><path d="M854 139.5 L867.8 153.3 M867.8 139.5 L854 153.3" stroke="#222" stroke-width="1.7" stroke-linecap="round"/><path d="M635 172.5H899" stroke="#dedede" stroke-width="1"/><defs><linearGradient id="sun" x1="0.2" y1="0.1" x2="0.8" y2="0.9"><stop offset="0" stop-color="#f7e51e"/><stop offset="1" stop-color="#f2862c"/></linearGradient><linearGradient id="cl" x1="0" y1="0" x2="1" y2="0.3"><stop offset="0" stop-color="#ffffff"/><stop offset="1" stop-color="#c9cacc"/></linearGradient><clipPath id="rbclip"><path d="M710.8 252 C710.8 222 730 195 766 194.5 C792 194.5 808 200 816 206 L826 252 Z"/></clipPath></defs><path d="M701.5 252 C701.5 214 726 185.5 767 185 C793 185 808 190 816 195 C828 192 838 203 835 219 C837 230 837 244 836.5 253 Q836 260.5 829 260.5 H781 Q776.5 260.5 776.5 256 Q776 250.5 768.5 250.5 Q761 250.5 760.5 256 Q760 260.5 756 260.5 H708 Q701.5 260.5 701.5 253 Z" fill="#e8e9e9"/><path d="M706.5 252 C706.5 219 728 190 767 189.5 C791 189.5 806 195 815 201 C825 199 832 208 829.5 220 C832 232 832 244 831.5 252 Q831.5 256 827 256 H779 Q776 256 775.5 252 Q775 245.5 768.5 245.5 Q762 245.5 761.5 252 Q761 256 758 256 H710 Q706.5 256 706.5 252 Z" fill="#fff"/><g clip-path="url(#rbclip)"><rect x="700" y="185" width="140" height="80" fill="#dcebf7"/></g><path d="M710.8 252 C710.8 222 730 195 766 194.5 C792 194.5 808 200 816 206" fill="none" stroke="#555" stroke-width="0.5"/><circle cx="731" cy="227.3" r="19.3" fill="url(#sun)" stroke="#6b5220" stroke-width="0.5"/><g clip-path="url(#rbclip)"><path d="M732.2 252 A37.0 37.0 0 0 1 806.2 252" fill="none" stroke="#e5393b" stroke-width="5.2"/><path d="M737.4000000000001 252 A31.8 31.8 0 0 1 801.0 252" fill="none" stroke="#f5901f" stroke-width="5.2"/><path d="M742.6 252 A26.6 26.6 0 0 1 795.8000000000001 252" fill="none" stroke="#fbc62a" stroke-width="5.2"/><path d="M747.8000000000001 252 A21.4 21.4 0 0 1 790.6 252" fill="none" stroke="#38a845" stroke-width="5.2"/><path d="M753.0 252 A16.2 16.2 0 0 1 785.4000000000001 252" fill="none" stroke="#2196d3" stroke-width="5.2"/><path d="M758.2 252 A11.0 11.0 0 0 1 780.2 252" fill="none" stroke="#7a4aa3" stroke-width="5.2"/><path d="M729.6 252 A39.6 39.6 0 0 1 808.8000000000001 252" fill="none" stroke="#333" stroke-width="0.45"/><path d="M734.8000000000001 252 A34.4 34.4 0 0 1 803.6 252" fill="none" stroke="#333" stroke-width="0.45"/><path d="M740.0 252 A29.200000000000003 29.200000000000003 0 0 1 798.4000000000001 252" fill="none" stroke="#333" stroke-width="0.45"/><path d="M745.2 252 A24.0 24.0 0 0 1 793.2 252" fill="none" stroke="#333" stroke-width="0.45"/><path d="M750.4000000000001 252 A18.8 18.8 0 0 1 788.0 252" fill="none" stroke="#333" stroke-width="0.45"/><path d="M755.6 252 A13.600000000000001 13.600000000000001 0 0 1 782.8000000000001 252" fill="none" stroke="#333" stroke-width="0.45"/><path d="M760.8000000000001 252 A8.399999999999999 8.399999999999999 0 0 1 777.6 252" fill="none" stroke="#333" stroke-width="0.45"/></g><path d="M761.2 252.5 A8 8 0 0 1 777.2 252.5 Z" fill="#fff"/><path d="M710.8 252 H761.2 M777 252 H792" stroke="#444" stroke-width="0.6"/><path d="M791.5 200.5 Q782 206 786.5 217.5 Q789 216 790.5 214 Q786.5 207 791.5 200.5 Z" fill="#f4efbf" stroke="#9c9050" stroke-width="0.4"/><path d="M789.5 214 Q790 206.5 797 207 Q799 200.5 807 202.5 Q811 197.5 817.5 202 Q822 205 821.5 211 Q824.5 214 823 220 L790 221 Z" fill="url(#cl)" stroke="#8e8e8e" stroke-width="0.5"/><path d="M790.5 213 Q806 209 827 218 Q808 236 792 252 H790.5 Z" fill="#f4f5f5"/><path d="M792 252 Q808 236 827 218 Q832 232 831.5 252 Z" fill="#e6e7e7"/><text x="767.3" y="286.7" font-size="13.6" fill="#1e1e1e" letter-spacing="0.2" text-anchor="middle" stroke="#1e1e1e" stroke-width="0.55">Kiss Cut</text><text x="766.5" y="305" font-size="12.5" fill="#1e1e1e" letter-spacing="0.25" text-anchor="middle" >Cuts through printable material</text><text x="767" y="320.6" font-size="12.5" fill="#1e1e1e" letter-spacing="0.25" text-anchor="middle" >only, leaving liner intact</text><text x="651.3" y="354.9" font-size="14.6" fill="#111" letter-spacing="0.1" stroke="#111" stroke-width="0.25">Border</text><rect x="651.5" y="360.5" width="231" height="30.6" rx="6" fill="#fff" stroke="#dcdcdc"/><text x="660.3" y="380.9" font-size="14.4" fill="#222" letter-spacing="0.05" >Standard</text><path d="M861.5 374.3 L866.8 379.6 L872.1 374.3" fill="none" stroke="#222" stroke-width="1.6" stroke-linecap="round" stroke-linejoin="round"/><text x="651.3" y="427" font-size="14.6" fill="#222" letter-spacing="0.1" >Border Fill Color</text><rect x="800" y="413.5" width="19.5" height="19" rx="3.5" fill="#fff" stroke="#00835a" stroke-width="2"/><rect x="831" y="413" width="19" height="19.6" rx="3.5" fill="#141414"/><rect x="861.5" y="413" width="20.5" height="19.6" rx="3" fill="#fff" stroke="#cfcfcf"/><path d="M866.3 422.8H876.7M871.5 417.6V428" stroke="#222" stroke-width="1.6"/><path d="M635 453.8H899" stroke="#dedede"/><text x="651.3" y="481.2" font-size="14.6" fill="#222" letter-spacing="0.1" >Die-Cut Edge</text><rect x="845" y="466.2" width="34" height="21.4" rx="10.7" fill="#00835a"/><circle cx="868.6" cy="476.9" r="8.1" fill="#fff"/><text x="651.3" y="508" font-size="10.5" fill="#333" letter-spacing="0.05" >Create an easy-peel with an additional border &amp;</text><text x="651.3" y="523.8" font-size="10.5" fill="#333" letter-spacing="0.1" >cut that goes all the way through the liner</text><path d="M635 540.5H899" stroke="#dedede"/><text x="651.3" y="568.2" font-size="14.6" fill="#a9a9a9" letter-spacing="0.1" >Cut Interior Shapes</text><rect x="845.5" y="553.5" width="33" height="20.8" rx="10.4" fill="#fff" stroke="#a9a9a9" stroke-width="1.5"/><circle cx="856" cy="563.9" r="9.4" fill="#fff" stroke="#a9a9a9" stroke-width="1.5"/><path d="M635 587.8H899" stroke="#dedede"/><path d="M723.2 617.2 A7.1 7.1 0 1 0 717.2 609.2" fill="none" stroke="#d8471e" stroke-width="1.6" stroke-linecap="round"/><path d="M714.4 610 L717.1 612.8 L719.8 610" fill="none" stroke="#d8471e" stroke-width="1.6" stroke-linecap="round" stroke-linejoin="round"/><text x="736.8" y="614.9" font-size="14.6" fill="#d8471e" letter-spacing="0.05" >Undo Sticker</text><path d="M635 632.5H899" stroke="#dedede"/><rect x="651.5" y="649.5" width="107.5" height="31.5" rx="15.75" fill="#fff" stroke="#00835a" stroke-width="1.2"/><text x="705.2" y="670.1" font-size="11.8" fill="#00835a" font-weight="700" letter-spacing="0.1" text-anchor="middle" >Back</text><rect x="775" y="649" width="108" height="32.4" rx="16.2" fill="#00835a"/><text x="829" y="670.1" font-size="11.8" fill="#fff" font-weight="700" letter-spacing="0.1" text-anchor="middle" >Apply</text><path d="M630.5 125 H646 V140.5 H637 L634 143.5 V140.5 H630.5 Z" fill="#0b9a6a"/><path d="M641.5 130.2 A3.6 3.6 0 1 0 641.8 136.4" fill="none" stroke="#fff" stroke-width="1.2"/><path d="M639.5 128.4 A5 5 0 0 1 644.5 133" fill="none" stroke="#fff" stroke-width="1"/></svg><svg width="1374" height="858" style="position:absolute;left:0;top:0" viewBox="0 0 1374 858"><defs><filter id="ds" x="-20%" y="-20%" width="140%" height="140%"><feGaussianBlur in="SourceAlpha" stdDeviation="2"/><feOffset dx="2" dy="2" result="b"/><feComponentTransfer><feFuncA type="linear" slope="0.45"/></feComponentTransfer><feMerge><feMergeNode/><feMergeNode in="SourceGraphic"/></feMerge></filter></defs><g filter="url(#ds)"><path d="M650.5 130 L557 296 L706.5 579" fill="none" stroke="#fa4249" stroke-width="7.2" stroke-linejoin="round"/><path d="M659.6 112.6 L640.8 125.3 L658.7 135.8 Z" fill="#fa4249" stroke="#fa4249" stroke-width="1" stroke-linejoin="round"/><path d="M715.6 596.2 L696.8 583.3 L715.3 573 Z" fill="#fa4249" stroke="#fa4249" stroke-width="1" stroke-linejoin="round"/></g></svg><div class="abs" style="left:0;top:0;width:1374px;height:858px;border:1px solid #000;pointer-events:none"></div></body></html>
